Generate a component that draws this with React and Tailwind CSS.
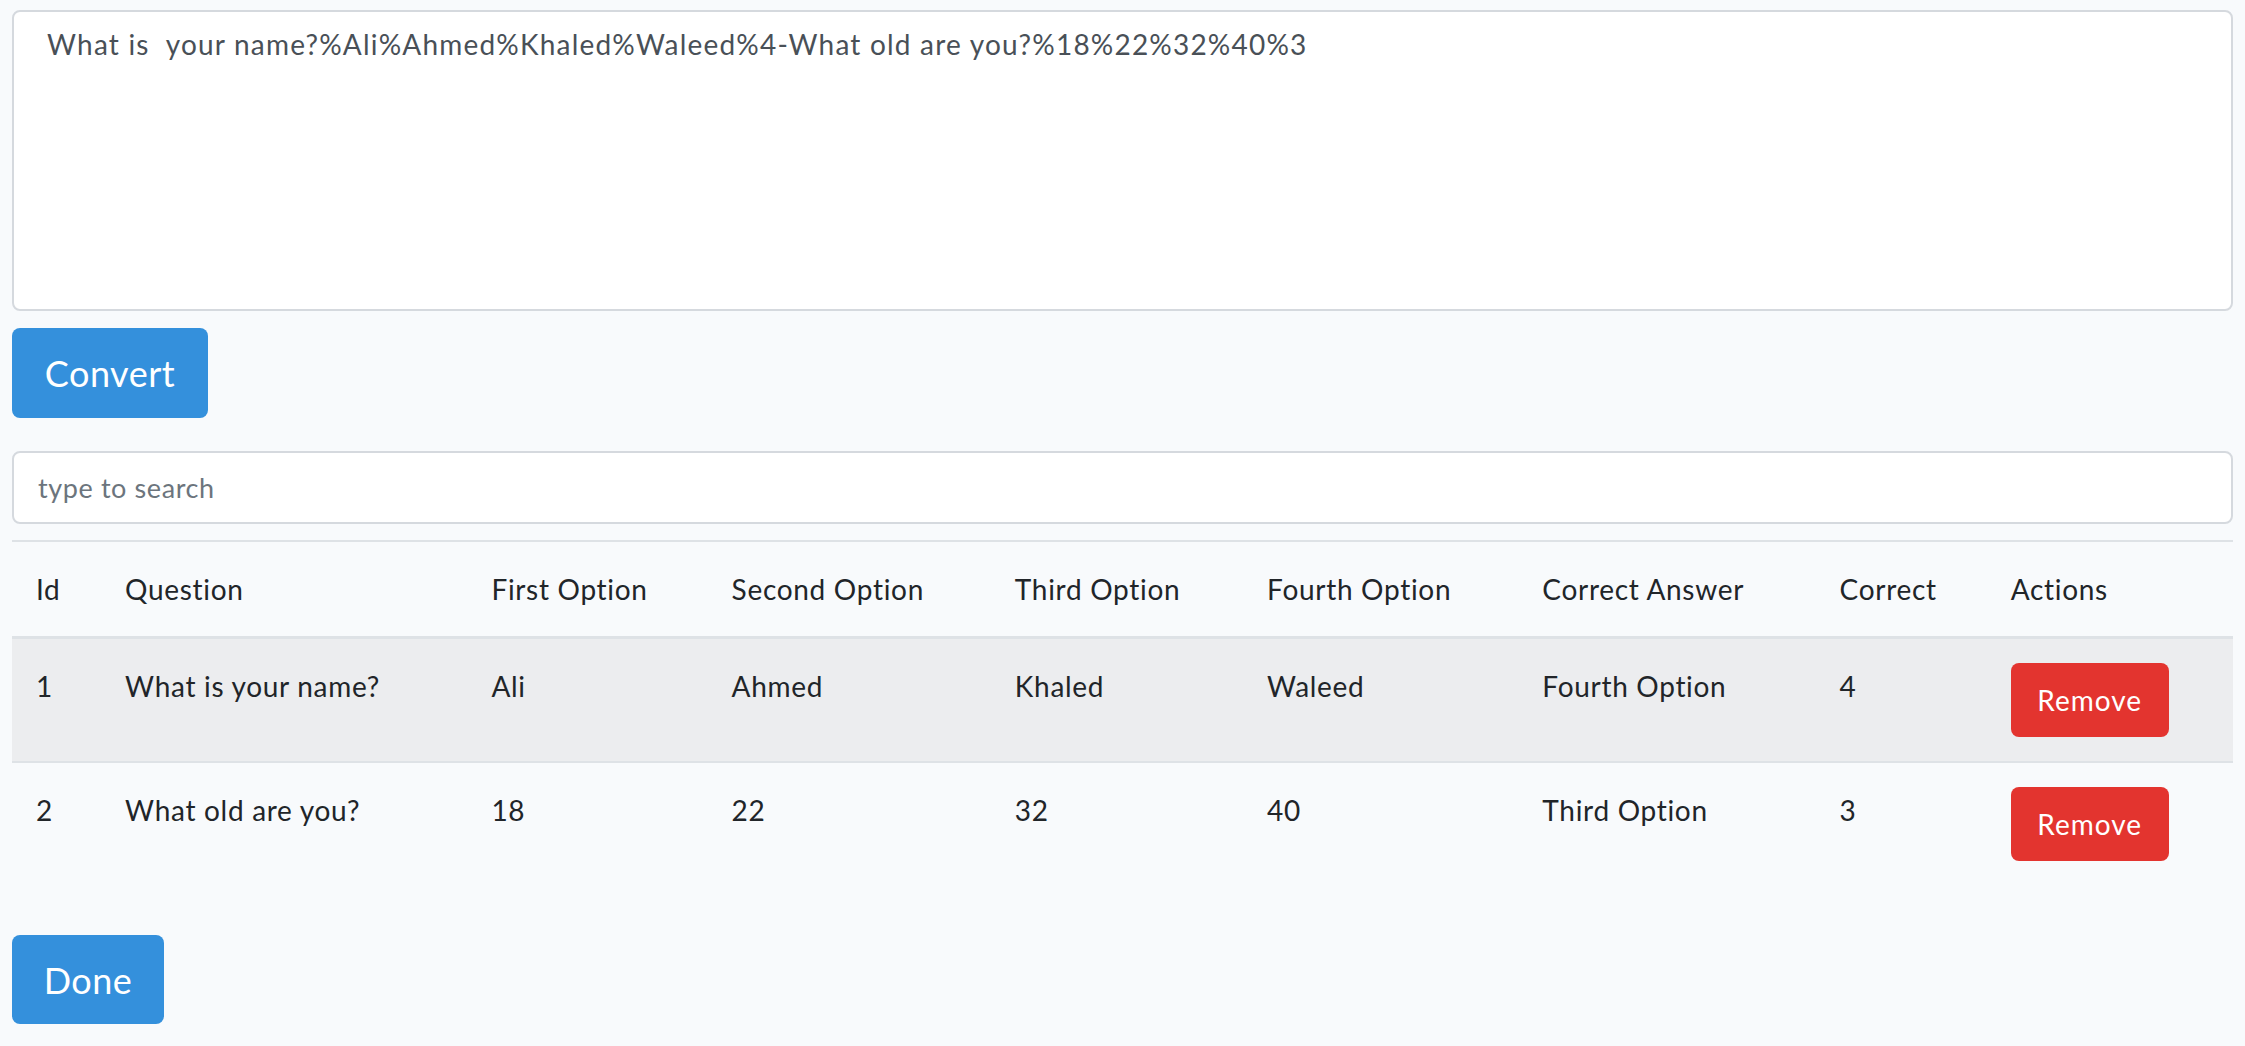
const QUESTIONS = [
  { id: 1, question: 'What is your name?', options: ['Ali', 'Ahmed', 'Khaled', 'Waleed'], answer: 'Fourth Option', correct: 4 },
  { id: 2, question: 'What old are you?', options: ['18', '22', '32', '40'], answer: 'Third Option', correct: 3 },
]

const HEADERS = ['Id', 'Question', 'First Option', 'Second Option', 'Third Option', 'Fourth Option', 'Correct Answer', 'Correct', 'Actions']
const WIDTHS = [89, 366, 240, 283, 252, 275, 297, 171, 246]

export default function App() {
  return (
    <div className="min-h-screen bg-[#f8fafc] px-[12px] pt-[10px] pb-[20px] font-['Lato','Liberation_Sans',sans-serif] text-[#212529]">
      {/* Texto a convertir */}
      <textarea
        className="block w-full h-[301px] resize-none rounded-[8px] border-2 border-[#d5d9de] bg-white px-[33px] pt-[9px] text-[28px] leading-[46px] tracking-[1.2px] text-[#495057] outline-none"
        defaultValue="What is  your name?%Ali%Ahmed%Khaled%Waleed%4-What old are you?%18%22%32%40%3"
      />

      <button className="mt-[17px] block h-[90px] w-[196px] rounded-[8px] bg-[#3490dc] text-[36px] tracking-[0.5px] text-white">
        Convert
      </button>

      <input
        className="mt-[33px] block h-[73px] w-full rounded-[8px] border-2 border-[#d5d9de] bg-white px-[24px] text-[27px] tracking-[0.6px] text-[#495057] placeholder-[#6c757d] outline-none"
        placeholder="type to search"
      />

      {/* Tabla de preguntas */}
      <table className="mt-[16px] w-full table-fixed border-collapse text-[28px] leading-[46px] tracking-[0.7px]">
        <colgroup>
          {WIDTHS.map((w, i) => (
            <col key={i} style={{ width: w }} />
          ))}
        </colgroup>
        <thead>
          <tr className="border-t-2 border-b-[3px] border-[#dee2e6]">
            {HEADERS.map((h) => (
              <th key={h} className="px-[24px] py-[24px] text-left align-top font-normal whitespace-nowrap">
                {h}
              </th>
            ))}
          </tr>
        </thead>
        <tbody>
          {QUESTIONS.map((q, index) => (
            <tr key={q.id} className={`border-t-2 border-[#dee2e6] first:border-t-0 ${index === 0 ? 'bg-[#ecedef]' : ''}`}>
              <td className="px-[24px] py-[24px] align-top">{q.id}</td>
              <td className="px-[24px] py-[24px] align-top whitespace-nowrap">{q.question}</td>
              {q.options.map((o, i) => (
                <td key={i} className="px-[24px] py-[24px] align-top">{o}</td>
              ))}
              <td className="px-[24px] py-[24px] align-top whitespace-nowrap">{q.answer}</td>
              <td className="px-[24px] py-[24px] align-top">{q.correct}</td>
              <td className="px-[24px] py-[24px] align-top">
                <button className="h-[74px] w-[158px] rounded-[8px] bg-[#e3342f] text-[28px] tracking-[1px] text-white">
                  Remove
                </button>
              </td>
            </tr>
          ))}
        </tbody>
      </table>

      <button className="mt-[50px] block h-[89px] w-[152px] rounded-[8px] bg-[#3490dc] text-[36px] tracking-[0.5px] text-white">
        Done
      </button>
    </div>
  )
}
